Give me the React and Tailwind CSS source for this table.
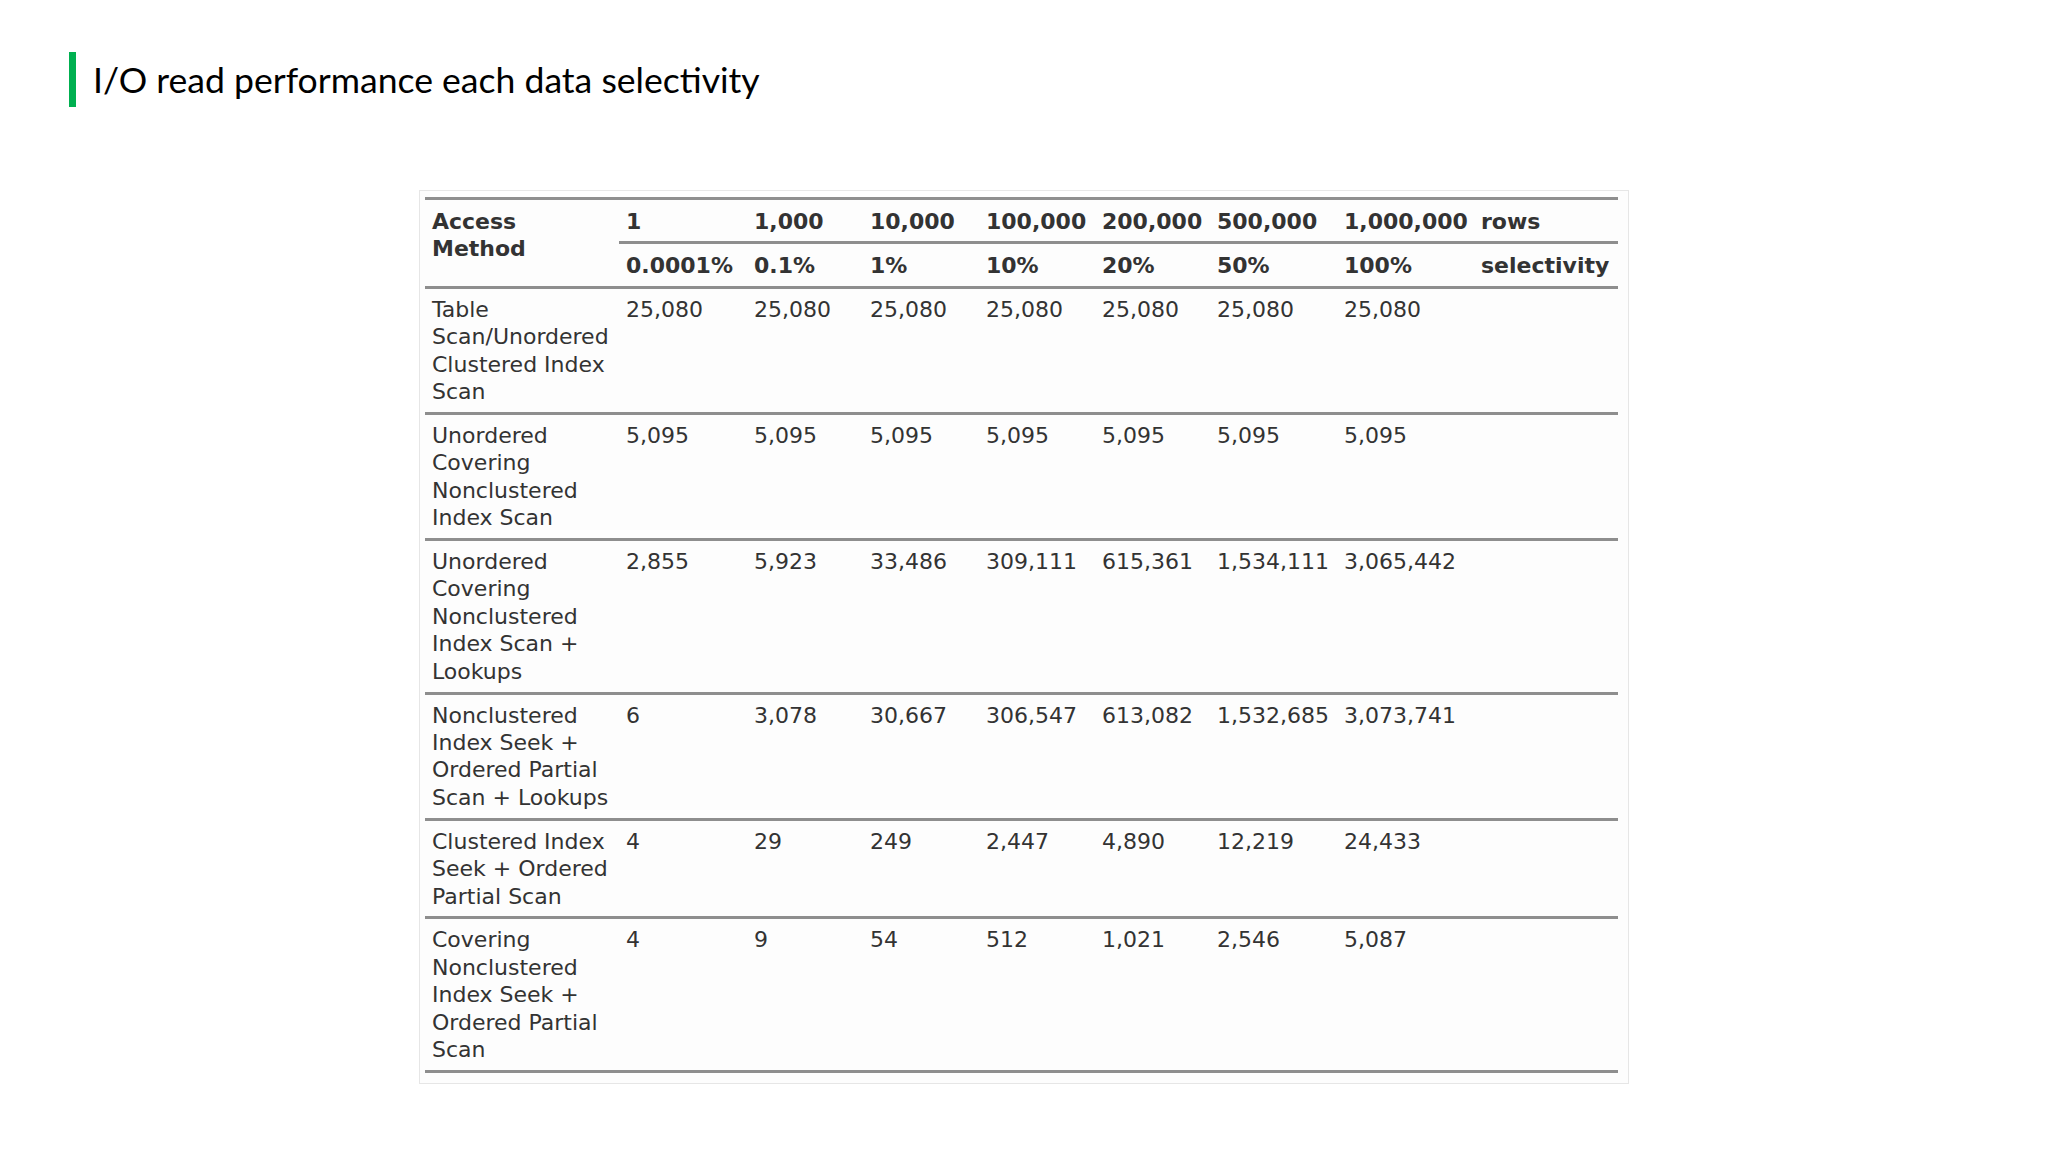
import React from "react";

const rows = [
  {
    name: "Table Scan/Unordered Clustered Index Scan",
    vals: ["25,080", "25,080", "25,080", "25,080", "25,080", "25,080", "25,080"],
  },
  {
    name: "Unordered Covering Nonclustered Index Scan",
    vals: ["5,095", "5,095", "5,095", "5,095", "5,095", "5,095", "5,095"],
  },
  {
    name: "Unordered Covering Nonclustered Index Scan + Lookups",
    vals: ["2,855", "5,923", "33,486", "309,111", "615,361", "1,534,111", "3,065,442"],
  },
  {
    name: "Nonclustered Index Seek + Ordered Partial Scan + Lookups",
    vals: ["6", "3,078", "30,667", "306,547", "613,082", "1,532,685", "3,073,741"],
  },
  {
    name: "Clustered Index Seek + Ordered Partial Scan",
    vals: ["4", "29", "249", "2,447", "4,890", "12,219", "24,433"],
  },
  {
    name: "Covering Nonclustered Index Seek + Ordered Partial Scan",
    vals: ["4", "9", "54", "512", "1,021", "2,546", "5,087"],
  },
];

const rowsHdr = ["1", "1,000", "10,000", "100,000", "200,000", "500,000", "1,000,000", "rows"];
const selHdr = ["0.0001%", "0.1%", "1%", "10%", "20%", "50%", "100%", "selectivity"];

export default function App() {
  return (
    <div className="w-[2048px] h-[1152px] bg-white overflow-hidden">
      <div className="flex items-center ml-[69px] pt-[52px]">
        <div className="w-[7px] h-[55px] bg-[#00b050]" />
        <div
          className="ml-[17px] text-[35.6px] leading-none text-black"
          style={{ fontFamily: "Lato, 'Open Sans', sans-serif" }}
        >
          I/O read performance each data selectivity
        </div>
      </div>

      <div className="ml-[419px] mt-[83px] w-[1210px] h-[894px] border border-[#e6e6e6] bg-[#fdfdfd] pl-[5px] pt-[6px]">
        <table
          className="table-fixed w-[1193px] border-separate border-spacing-0 text-[22px] leading-[27.4px] text-[#333333]"
          style={{ fontFamily: "'DejaVu Sans', Verdana, sans-serif" }}
        >
          <colgroup>
            <col className="w-[194px]" />
            <col className="w-[128px]" />
            <col className="w-[116px]" />
            <col className="w-[116px]" />
            <col className="w-[116px]" />
            <col className="w-[115px]" />
            <col className="w-[127px]" />
            <col className="w-[137px]" />
            <col className="w-[144px]" />
          </colgroup>
          <thead>
            <tr>
              <th
                rowSpan={2}
                className="text-left align-top font-bold border-t-[3px] border-b-[3px] border-[#8e8e8e] pl-[7px] pt-[8px]"
              >
                Access
                <br />
                Method
              </th>
              {rowsHdr.map((h) => (
                <th
                  key={h}
                  className="text-left align-top font-bold whitespace-nowrap border-t-[3px] border-b-[3px] border-[#8e8e8e] pl-[7px] pt-[8px] pb-[6px]"
                >
                  {h}
                </th>
              ))}
            </tr>
            <tr>
              {selHdr.map((h) => (
                <th
                  key={h}
                  className="text-left align-top font-bold whitespace-nowrap border-b-[3px] border-[#8e8e8e] pl-[7px] pt-[8px] pb-[6px]"
                >
                  {h}
                </th>
              ))}
            </tr>
          </thead>
          <tbody>
            {rows.map((r) => (
              <tr key={r.name}>
                <td className="align-top border-b-[3px] border-[#8e8e8e] pl-[7px] pt-[7px] pb-[6.5px]">
                  {r.name}
                </td>
                {r.vals.map((v, i) => (
                  <td
                    key={i}
                    className="align-top whitespace-nowrap border-b-[3px] border-[#8e8e8e] pl-[7px] pt-[7px] pb-[6.5px]"
                  >
                    {v}
                  </td>
                ))}
                <td className="border-b-[3px] border-[#8e8e8e]" />
              </tr>
            ))}
          </tbody>
        </table>
      </div>
    </div>
  );
}
